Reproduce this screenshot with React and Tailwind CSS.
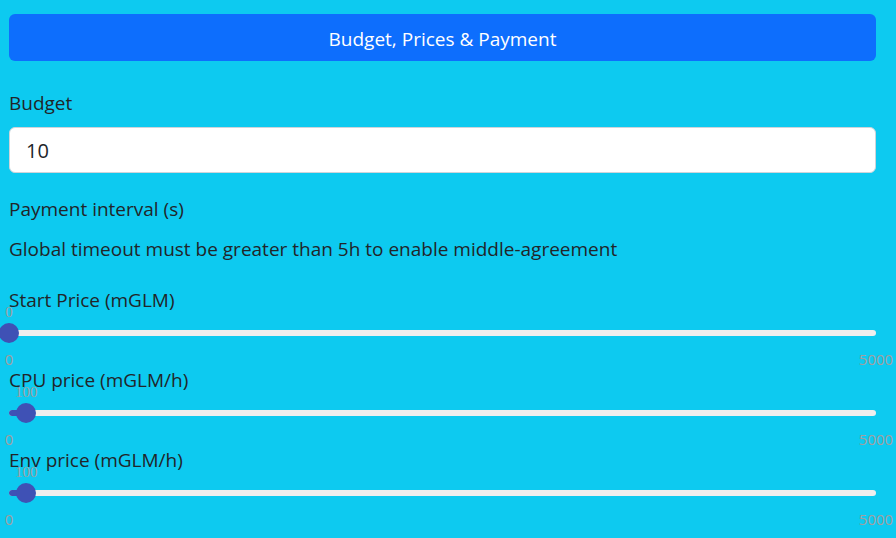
import React from 'react';

const sans = { fontFamily: '"Open Sans", "Noto Sans", sans-serif' };

const PriceSlider = ({ label, value, min, max }) => {
  const pct = ((value - min) / (max - min)) * 100;
  return (
    <div className="flex flex-col">
      <div className="text-[19px] leading-[27px] text-[#212529]">{label}</div>
      <div className="relative h-[53px]">
        {/* rail */}
        <div className="absolute left-0 right-0 top-[16px] h-[6px] rounded-full bg-[#eeeeee]" />
        {/* filled part */}
        <div
          className="absolute left-0 top-[16px] h-[6px] rounded-full bg-[#3f51b5]"
          style={{ width: `${pct}%` }}
        />
        {/* thumb */}
        <div
          className="absolute top-[9px] h-[20px] w-[20px] -translate-x-1/2 rounded-full bg-[#3f51b5]"
          style={{ left: `${pct}%` }}
        />
        {/* value label */}
        <div
          className="absolute top-[-10px] -translate-x-1/2 font-['Liberation_Serif',serif] text-[15px] leading-[17px] text-[#a0a0a0]"
          style={{ left: `${pct}%` }}
        >
          {value}
        </div>
        {/* marks */}
        <div className="absolute left-0 top-[37px] -translate-x-1/2 text-[15px] leading-[17px] text-[#a0a0a0]">
          {min}
        </div>
        <div className="absolute left-full top-[37px] -translate-x-1/2 text-[15px] leading-[17px] text-[#a0a0a0]">
          {max}
        </div>
      </div>
    </div>
  );
};

export default function App() {
  return (
    <div className="flex min-h-screen flex-col bg-[#0dcaf0] pl-[9px] pr-[20px] pt-[14px]" style={sans}>
      <button className="h-[47px] w-full rounded-md bg-[#0d6efd] pt-[3px] text-[19px] text-white">
        Budget, Prices &amp; Payment
      </button>

      <div className="mt-[29px] flex flex-col gap-[10px]">
        <div className="text-[19px] leading-[27px] text-[#212529]">Budget</div>
        <input
          className="h-[46px] w-full rounded-md border border-[#ced4da] bg-white px-4 text-[20px] text-[#212529] outline-none"
          defaultValue="10"
        />
      </div>

      <div className="mt-[23px] flex flex-col gap-[13px] text-[19px] leading-[27px] text-[#212529]">
        <div>Payment interval (s)</div>
        <div>Global timeout must be greater than 5h to enable middle-agreement</div>
      </div>

      <div className="mt-[24px] flex flex-col">
        <PriceSlider label="Start Price (mGLM)" value={0} min={0} max={5000} />
        <PriceSlider label="CPU price (mGLM/h)" value={100} min={0} max={5000} />
        <PriceSlider label="Env price (mGLM/h)" value={100} min={0} max={5000} />
      </div>
    </div>
  );
}
